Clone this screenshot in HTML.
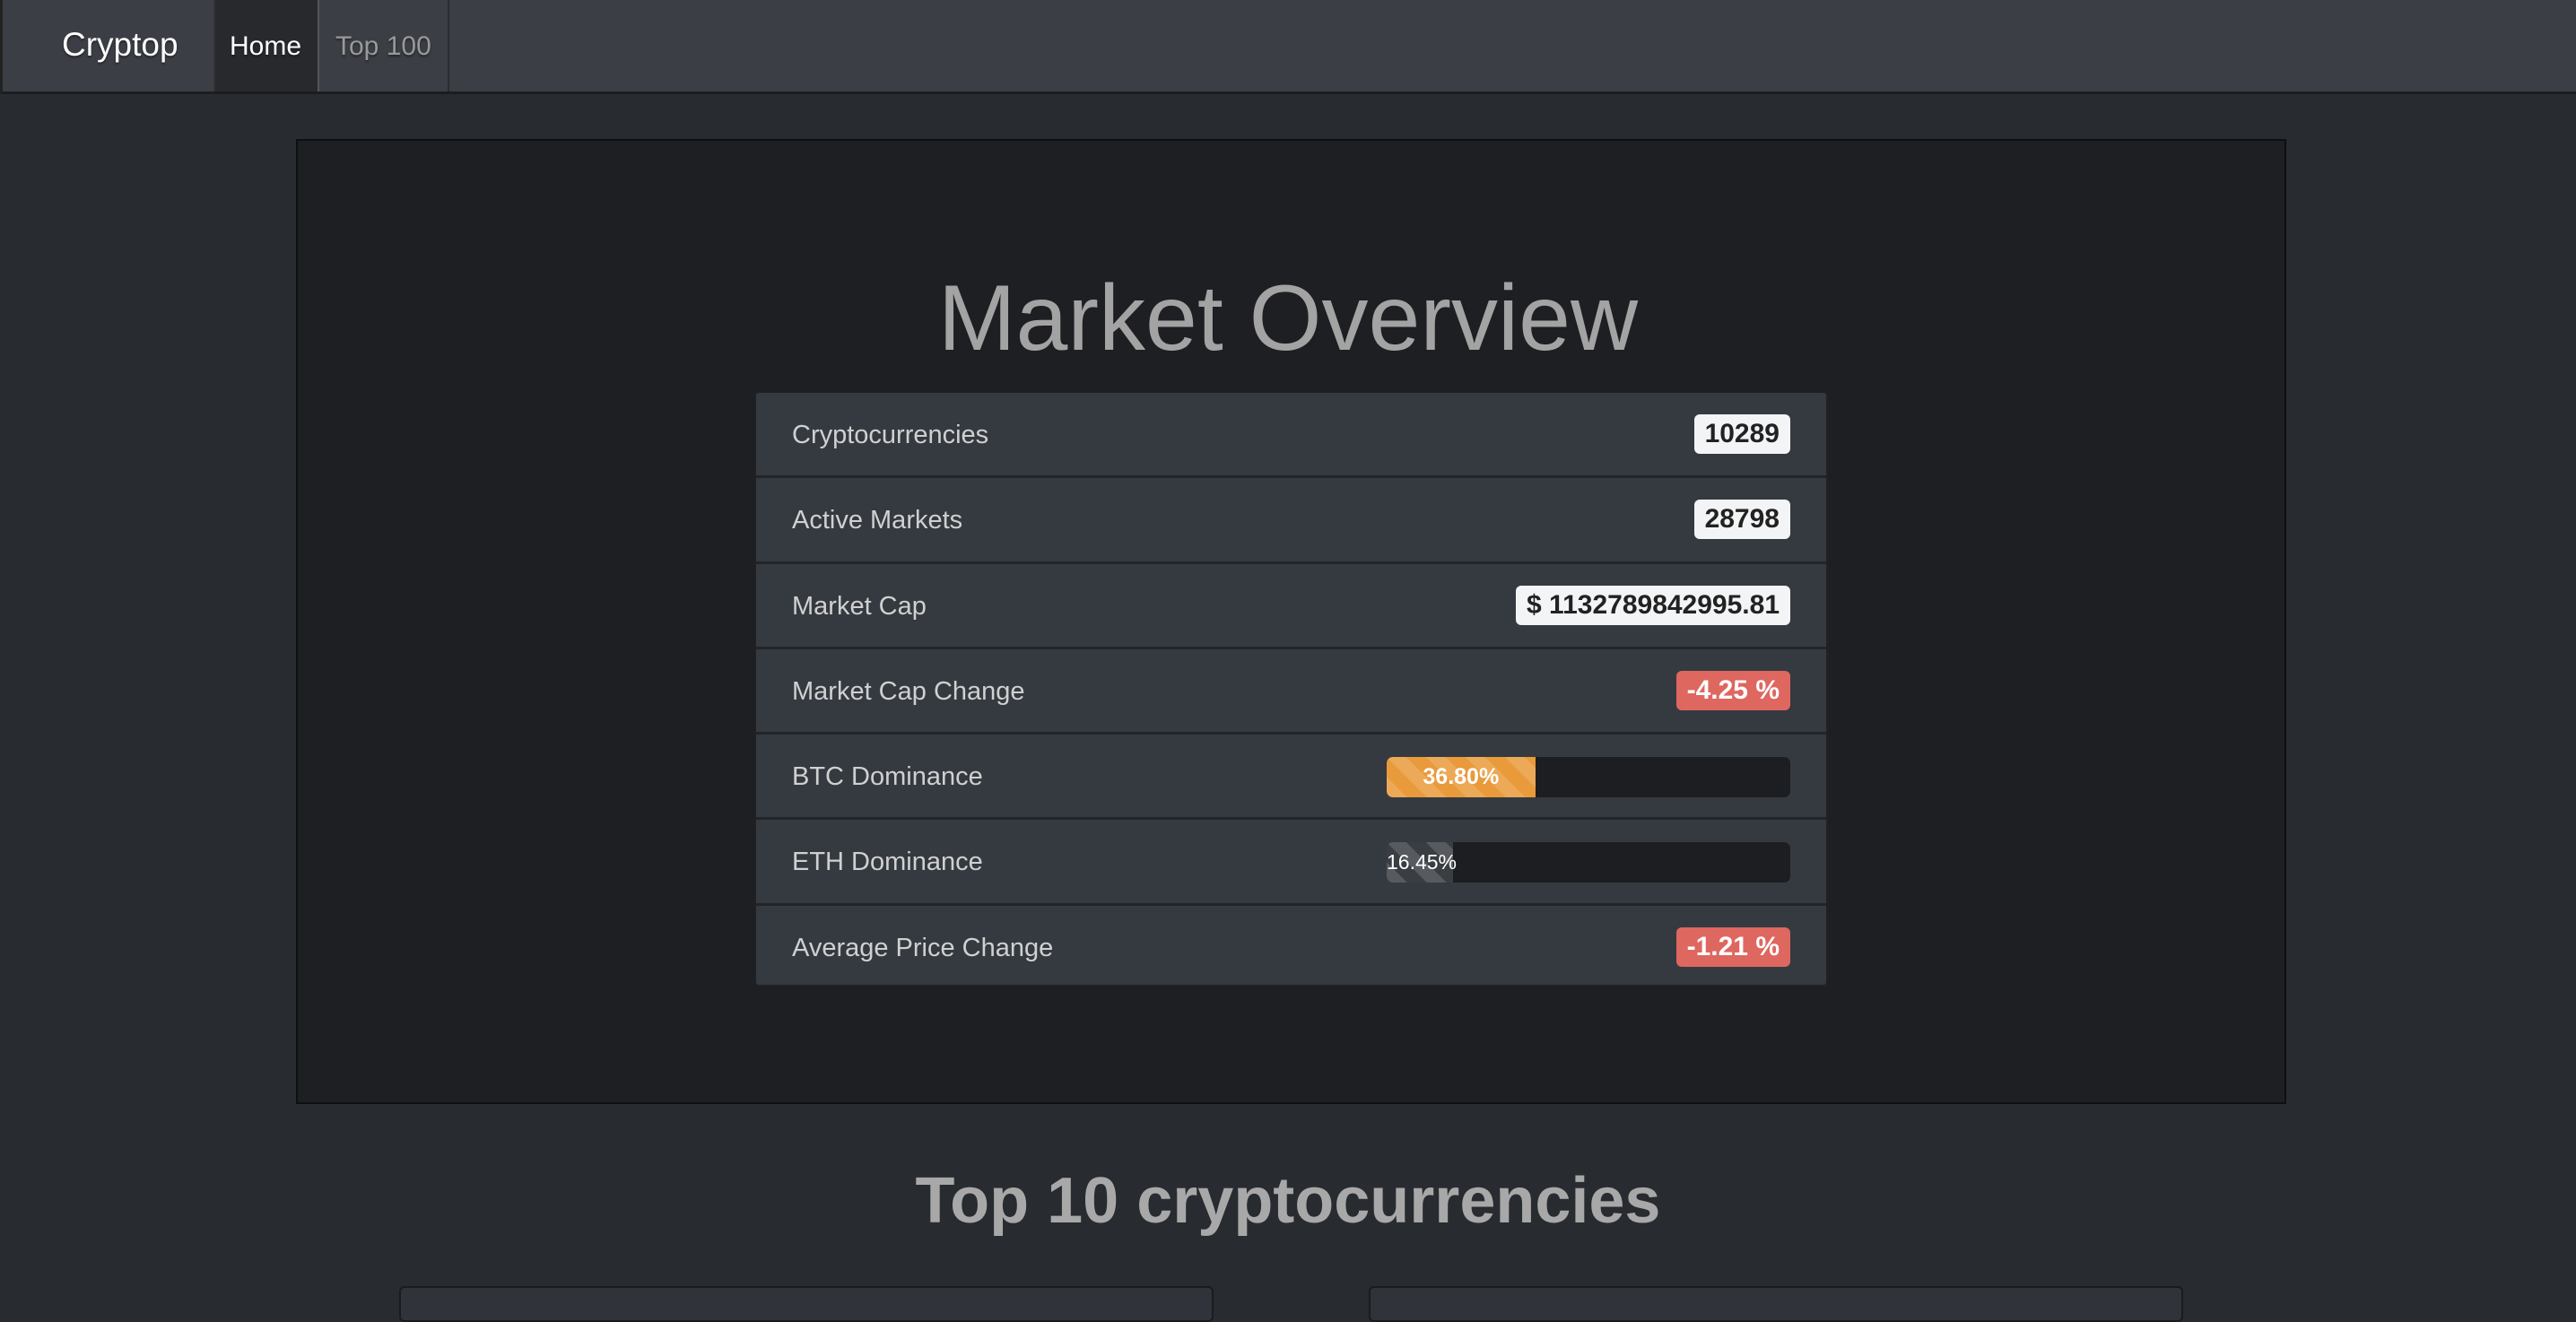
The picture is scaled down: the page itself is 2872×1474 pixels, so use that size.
<!DOCTYPE html>
<html><head><meta charset="utf-8"><style>
*{box-sizing:border-box;margin:0;padding:0}
html,body{width:2872px;height:1448px;overflow:hidden;background:#282b30;font-family:"Liberation Sans",sans-serif}
.nav{position:absolute;left:0;top:0;width:2872px;height:105px;background:#3b3e44;border-bottom:3px solid #1c1d20;border-left:3px solid #222}
.brand{position:absolute;left:66px;top:29px;font-size:37px;color:#fff;text-shadow:0 2px 2px rgba(0,0,0,.4)}
.home{position:absolute;left:235px;top:0;width:118px;height:102px;background:#27292d;border-left:2px solid #333;border-right:2px solid #555}
.home span,.t100 span{position:absolute;top:35px;font-size:30px;text-shadow:0 2px 2px rgba(0,0,0,.4)}
.home span{left:16px;color:#fff}
.t100{position:absolute;left:353px;top:0;width:145px;height:102px;border-right:2px solid #2a2c30}
.t100 span{left:18px;color:#999}
.jumbo{position:absolute;left:330px;top:155px;width:2219px;height:1076px;background:#1e1f23;border:2px solid #0e0f11}
h1{position:absolute;left:0;width:100%;top:303px;text-align:center;font-weight:300;font-size:104px;color:#a3a3a3;line-height:1}
.list{position:absolute;left:841px;top:436px;width:1197px;height:664px;background:#343a40;border:2px solid #1f2124;border-radius:5px;overflow:hidden}
.row{position:relative;height:95.3px;border-bottom:3px solid #222428;color:#d0d0d0;font-size:29px}
.row:last-child{border-bottom:none}
.row .l{position:absolute;left:40px;top:31px}
.badge{position:absolute;right:40px;top:24px;height:44px;line-height:44px;padding:0 12px;border-radius:6px;background:#f3f4f5;color:#222;font-weight:bold;font-size:30px}
.red{background:#de6760;color:#fff}
.prog{position:absolute;right:40px;top:25px;width:450px;height:45px;background:#1d1e21;border-radius:7px;overflow:hidden}
.bar{height:100%;color:#fff;font-size:25px;font-weight:bold;text-align:center;line-height:45px;background-image:linear-gradient(45deg,rgba(255,255,255,.15) 25%,transparent 25%,transparent 50%,rgba(255,255,255,.15) 50%,rgba(255,255,255,.15) 75%,transparent 75%,transparent);background-size:44px 44px}
h2{position:absolute;left:0;width:2872px;top:1303px;text-align:center;font-weight:bold;font-size:72px;color:#a8a8a8;line-height:1}
.card{position:absolute;top:1434px;height:40px;width:908px;background:#30343a;border:2px solid #1a1b1e;border-radius:6px}
</style></head><body>
<div class="nav"><div class="brand">Cryptop</div><div class="home"><span>Home</span></div><div class="t100"><span>Top 100</span></div></div>
<div class="jumbo"></div>
<h1>Market Overview</h1>
<div class="list">
<div class="row"><span class="l">Cryptocurrencies</span><span class="badge">10289</span></div>
<div class="row"><span class="l">Active Markets</span><span class="badge">28798</span></div>
<div class="row"><span class="l">Market Cap</span><span class="badge">$ 1132789842995.81</span></div>
<div class="row"><span class="l">Market Cap Change</span><span class="badge red">-4.25 %</span></div>
<div class="row"><span class="l">BTC Dominance</span><div class="prog"><div class="bar" style="width:36.8%;background-color:#e99a3a">36.80%</div></div></div>
<div class="row"><span class="l">ETH Dominance</span><div class="prog"><div class="bar" style="width:16.45%;background-color:#3a3d42;font-weight:normal;font-size:23px;text-align:left;white-space:nowrap">16.45%</div></div></div>
<div class="row"><span class="l">Average Price Change</span><span class="badge red">-1.21 %</span></div>
</div>
<h2>Top 10 cryptocurrencies</h2>
<div class="card" style="left:445px"></div>
<div class="card" style="left:1526px"></div>
</body></html>
